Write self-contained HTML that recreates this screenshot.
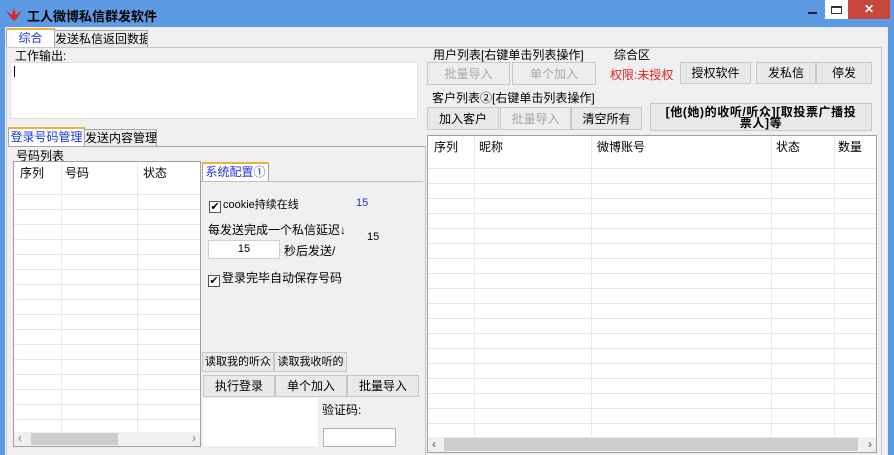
<!DOCTYPE html>
<html><head><meta charset="utf-8"><style>
*{box-sizing:border-box;margin:0;padding:0}
body{width:894px;height:455px;overflow:hidden;background:#5d9ae4;font-family:"Liberation Sans","Noto Sans CJK SC",sans-serif;font-size:12px;color:#000;position:relative}
.a{position:absolute;white-space:nowrap}
.btn{position:absolute;background:#e9e9e9;border:1px solid #c8c8c8;text-align:center;line-height:20px;white-space:nowrap;overflow:hidden}
.dis{color:#a8a8a8;background:#eeeeee}
.tab{position:absolute;border:1px solid #a8a8a8;border-bottom:none;background:#ececec;text-align:center;white-space:nowrap;overflow:hidden}
.act{background:#fff;border-top:2px solid #f0b040;color:#1d38e0}
.list{position:absolute;background:#fff;border:1px solid #a0a0a0;overflow:hidden}
.rows{position:absolute;left:0;right:0;top:18px;bottom:0;background-image:repeating-linear-gradient(to bottom,transparent 0,transparent 14px,#e6e6f0 14px,#e6e6f0 15px)}
.col{position:absolute;top:0;bottom:0;width:1px;background:#e8e8ee}
.chk{display:inline-block;width:12px;height:12px;border:1px solid #555;background:#fff;font-size:11px;line-height:10px;text-align:center;vertical-align:-2px;margin-right:2px}
</style></head><body>
<svg class="a" style="left:5px;top:6px" width="18" height="16" viewBox="0 0 18 16"><path d="M1 5 L7 9 L9 2 L11 9 L17 4 L12 12 L9 15 L6 12 Z" fill="#d8262a"/></svg>
<div class="a" style="left:27px;top:6px;font-size:13px;font-weight:bold">工人微博私信群发软件</div>
<div class="a" style="left:825px;top:0;width:23px;height:19px;background:#fff;"><div style="position:absolute;left:6px;top:6px;width:11px;height:8px;border:1px solid #333;border-top-width:2px"></div></div>
<div class="a" style="left:808px;top:12px;width:9px;height:2px;background:#222"></div>
<div class="a" style="left:848px;top:0;width:42px;height:19px;background:#c8463c;color:#fff;text-align:center;font-weight:bold;line-height:19px">✕</div>
<div class="a" style="left:5px;top:27px;width:883px;height:428px;background:#f0f0f0"></div>
<div class="tab act" style="left:6px;top:28px;width:49px;height:20px;line-height:17px">综合</div>
<div class="tab" style="left:54px;top:30px;width:94px;height:18px;line-height:17px">发送私信返回数据</div>
<div class="a" style="left:6px;top:47px;width:876px;height:408px;border:1px solid #c8c8c8;border-bottom:none"></div>
<div class="a" style="left:15px;top:47px">工作输出:</div>
<div class="a" style="left:10px;top:62px;width:408px;height:57px;background:#fff;border:1px solid #e0e0e0"><div style="position:absolute;left:3px;top:3px;width:1px;height:11px;background:#000"></div></div>
<div class="tab act" style="left:8px;top:127px;width:77px;height:20px;line-height:17px">登录号码管理</div>
<div class="tab" style="left:84px;top:129px;width:73px;height:18px;line-height:17px">发送内容管理</div>
<div class="a" style="left:8px;top:146px;width:418px;height:309px;border-top:1px solid #a8a8a8;border-right:1px solid #c8c8c8"></div>
<div class="a" style="left:16px;top:147px">号码列表</div>
<div class="list" style="left:13px;top:161px;width:188px;height:286px">
<div class="rows" style="bottom:14px"></div>
<div class="col" style="left:47px"></div><div class="col" style="left:123px"></div>
<div class="a" style="left:6px;top:2px">序列</div><div class="a" style="left:51px;top:2px">号码</div><div class="a" style="left:129px;top:2px">状态</div>
<div class="a" style="left:0;bottom:0;width:186px;height:14px;background:#f0f0f0"><div style="position:absolute;left:17px;top:1px;width:87px;height:12px;background:#cdcdcd"></div><span style="position:absolute;left:4px;top:-1px;color:#777">‹</span><span style="position:absolute;right:4px;top:-1px;color:#777">›</span></div>
</div>
<div class="tab act" style="left:202px;top:162px;width:67px;height:20px;line-height:17px">系统配置①</div>
<div class="a" style="left:201px;top:181px;width:222px;height:170px;border-top:1px solid #c0c0c0"></div>
<div class="a" style="left:209px;top:196px;font-size:11px"><span class="chk">✔</span>cookie持续在线</div>
<div class="a" style="left:356px;top:197px;color:#2030e0;font-size:11px">15</div>
<div class="a" style="left:208px;top:221px">每发送完成一个私信延迟↓</div>
<div class="a" style="left:367px;top:231px;font-size:11px">15</div>
<div class="a" style="left:208px;top:240px;width:72px;height:19px;background:#fff;border:1px solid #d0d0d0;text-align:center;line-height:17px;font-size:11px">15</div>
<div class="a" style="left:284px;top:242px">秒后发送/</div>
<div class="a" style="left:208px;top:269px"><span class="chk">✔</span>登录完毕自动保存号码</div>
<div class="btn" style="left:202px;top:352px;width:72px;height:20px;line-height:18px;font-size:11px">读取我的听众</div>
<div class="btn" style="left:274px;top:352px;width:73px;height:20px;line-height:18px;font-size:11px">读取我收听的</div>
<div class="btn" style="left:203px;top:375px;width:72px;height:22px">执行登录</div>
<div class="btn" style="left:275px;top:375px;width:72px;height:22px">单个加入</div>
<div class="btn" style="left:347px;top:375px;width:72px;height:22px">批量导入</div>
<div class="a" style="left:203px;top:398px;width:115px;height:48px;background:#fff"></div>
<div class="a" style="left:322px;top:401px">验证码:</div>
<div class="a" style="left:323px;top:428px;width:73px;height:19px;background:#fff;border:1px solid #b0b0b0"></div>
<div class="a" style="left:433px;top:46px">用户列表[右键单击列表操作]</div>
<div class="btn dis" style="left:427px;top:62px;width:83px;height:23px;line-height:22px">批量导入</div>
<div class="btn dis" style="left:512px;top:62px;width:84px;height:23px;line-height:22px">单个加入</div>
<div class="a" style="left:614px;top:46px">综合区</div>
<div class="a" style="left:610px;top:66px;color:#e82020">权限:未授权</div>
<div class="btn" style="left:680px;top:62px;width:71px;height:22px">授权软件</div>
<div class="btn" style="left:756px;top:62px;width:60px;height:22px">发私信</div>
<div class="btn" style="left:816px;top:62px;width:56px;height:22px">停发</div>
<div class="a" style="left:432px;top:89px">客户列表②[右键单击列表操作]</div>
<div class="btn" style="left:427px;top:107px;width:72px;height:23px;line-height:22px">加入客户</div>
<div class="btn dis" style="left:500px;top:107px;width:71px;height:23px;line-height:22px">批量导入</div>
<div class="btn" style="left:571px;top:107px;width:71px;height:23px;line-height:22px">清空所有</div>
<div class="btn" style="left:650px;top:103px;width:222px;height:28px;font-weight:bold;line-height:11px;padding:3px 10px 0;font-size:12px;letter-spacing:0.6px;white-space:normal">[他(她)的收听/听众][取投票广播投票人]等</div>
<div class="list" style="left:427px;top:135px;width:450px;height:318px">
<div class="rows" style="bottom:15px"></div>
<div class="col" style="left:46px"></div><div class="col" style="left:163px"></div><div class="col" style="left:343px"></div><div class="col" style="left:406px"></div>
<div class="a" style="left:6px;top:2px">序列</div><div class="a" style="left:51px;top:2px">昵称</div><div class="a" style="left:169px;top:2px">微博账号</div><div class="a" style="left:348px;top:2px">状态</div><div class="a" style="left:410px;top:2px">数量</div>
<div class="a" style="left:0;bottom:0;width:448px;height:15px;background:#f0f0f0"><div style="position:absolute;left:16px;top:1px;width:414px;height:13px;background:#cdcdcd"></div><span style="position:absolute;left:4px;top:0;color:#555">‹</span><span style="position:absolute;right:4px;top:0;color:#555">›</span></div>
</div>
</body></html>
